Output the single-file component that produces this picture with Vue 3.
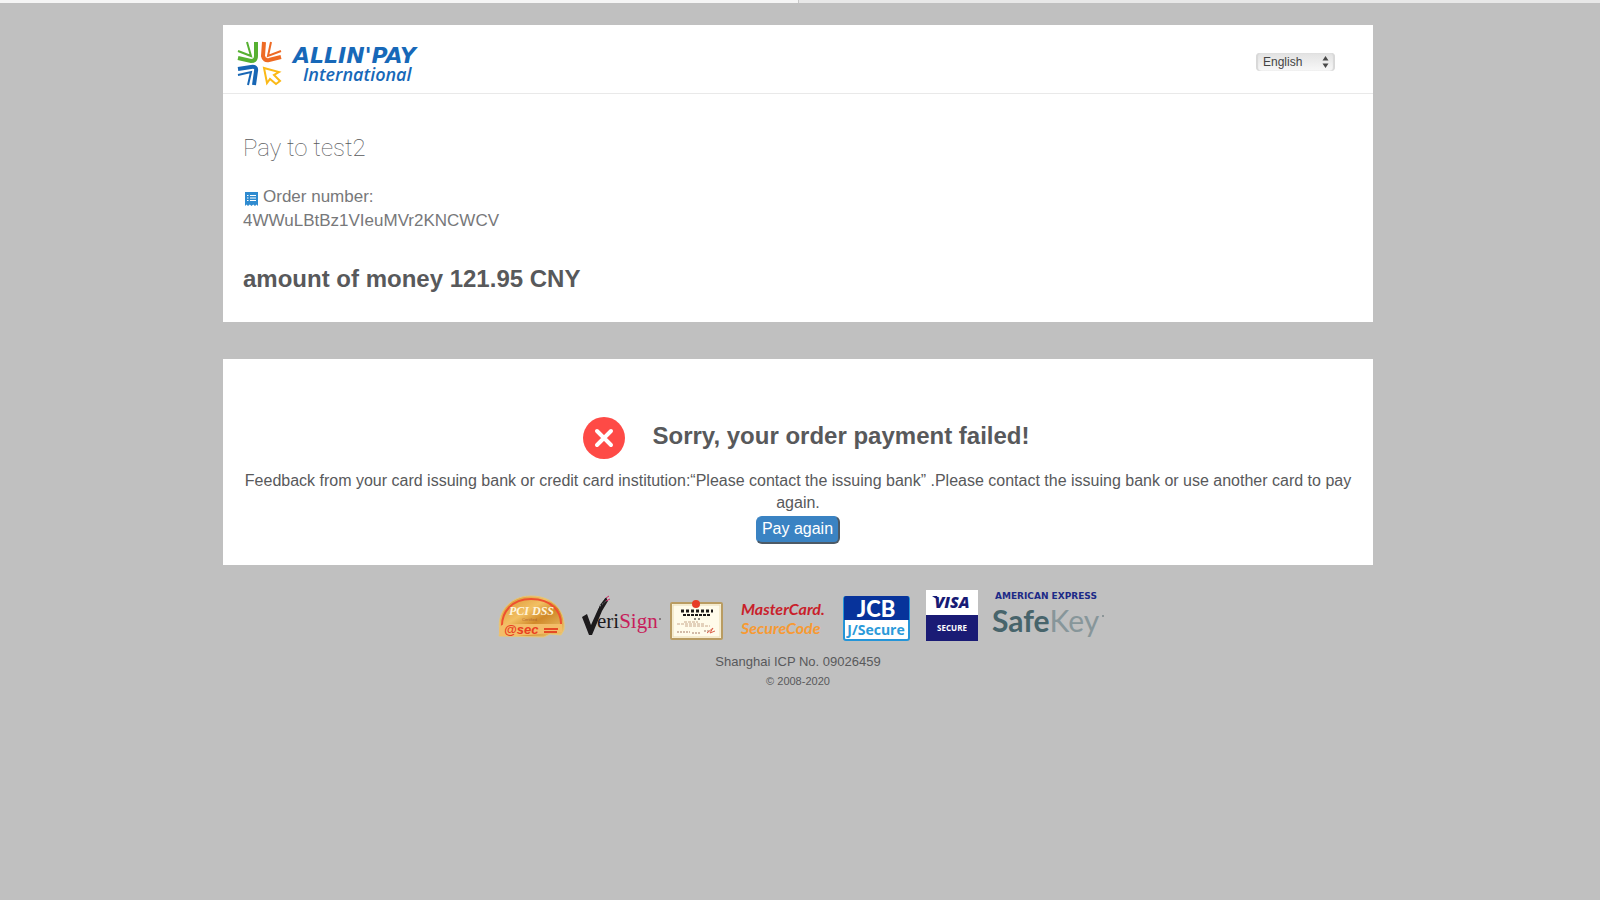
<template>
    <div class="page">
        <div class="top-strip">
            <span></span>
            <span></span>
        </div>

        <main class="container">
            <section class="card">
                <header class="card-header">
                    <svg class="logo" width="204" height="52" viewBox="0 0 204 52" role="img" aria-label="Allinpay International">
                        <g fill="none" stroke-width="3">
                            <g stroke="#56b031">
                                <path d="M1 10L14 15L10 1" stroke-width="2" />
                                <path d="M1 17L14 20Q19 20 19 15V1" stroke-width="4" />
                            </g>
                            <g stroke="#ee6a24">
                                <path d="M34 1L31 15L44 10" stroke-width="2" />
                                <path d="M27 1L26 15Q27 20 32 19L44 16" stroke-width="4" />
                            </g>
                            <g stroke="#1766b5">
                                <path d="M1 28L14 26Q20 25 19 30L17 44" stroke-width="4" />
                                <path d="M1 34L14 31L11 44" stroke-width="2" />
                            </g>
                            <path d="M27 27L42 31L37 34L43 40L39 43L33 38L30 42Z" stroke="#fbb917" stroke-width="2" />
                        </g>
                        <text class="logo-name" x="56" y="22">ALLIN'PAY</text>
                        <text class="logo-sub" x="66" y="40">International</text>
                    </svg>
                    <div class="language">
                        <select v-model="language" aria-label="Language">
                            <option v-for="item in languages" :key="item">{{ item }}</option>
                        </select>
                        <svg width="7" height="12" viewBox="0 0 7 12" aria-hidden="true">
                            <path d="M3.5 0L6.5 4.5H0.5ZM3.5 12L6.5 7.5H0.5Z" fill="#4a4a4a" />
                        </svg>
                    </div>
                </header>
                <div class="order">
                    <h1>Pay to {{ order.merchant }}</h1>
                    <p class="order-number">
                        <svg width="13" height="14" viewBox="0 0 13 14" aria-hidden="true">
                            <path d="M0 0H13V14L11.5 12.5L10 14L8.2 12.5L6.5 14L4.8 12.5L3 14L1.5 12.5L0 14Z" fill="#2f8bd0" />
                            <path d="M2 3.5H3.5M5 3.5H11M2 6H3.5M5 6H11M2 8.5H3.5M5 8.5H11" stroke="#fff" />
                        </svg>
                        <span>Order number:</span>
                    </p>
                    <p class="order-id">{{ order.id }}</p>
                    <h2>amount of money {{ order.amount }} {{ order.currency }}</h2>
                </div>
            </section>

            <section class="card result">
                <div class="result-title">
                    <svg width="42" height="42" viewBox="0 0 42 42" aria-hidden="true">
                        <circle cx="21" cy="21" r="21" fill="#fe4a46" />
                        <path d="M14 14L28 28M28 14L14 28" stroke="#fff" stroke-width="4" stroke-linecap="round" />
                    </svg>
                    <h2>Sorry, your order payment failed!</h2>
                </div>
                <p>
                    Feedback from your card issuing bank or credit card institution:“{{ order.feedback }}” .Please contact the
                    issuing bank or use another card to pay again.
                </p>
                <button type="button" class="pay-again">Pay again</button>
            </section>
        </main>

        <footer>
            <div class="badges">
                <svg width="80" height="52" viewBox="0 0 80 52" role="img" aria-label="PCI DSS atsec">
                    <defs>
                        <linearGradient id="gold" x1="0" y1="0" x2="1" y2="1">
                            <stop offset="0" stop-color="#d78b2c" />
                            <stop offset="0.4" stop-color="#f2c063" />
                            <stop offset="0.6" stop-color="#d18a2a" />
                            <stop offset="1" stop-color="#eecb76" />
                        </linearGradient>
                    </defs>
                    <path d="M10 41C6 25 18 6 41 6C64 6 76 22 74 40L71 45L60 44L54 47L9 46Z" fill="url(#gold)" stroke="#e6c77b" />
                    <path d="M12 38C11 22 22 9 41 9C62 9 72 22 71 36" fill="none" stroke="#ee5030" stroke-width="2" />
                    <path d="M9 40Q9 36 14 34H72V42Q50 44 27 46H10Z" fill="#f3bd68" />
                    <text class="pci-name" x="19" y="25">PCI DSS</text>
                    <text class="pci-note" x="32" y="31">Certified</text>
                    <text class="pci-sec" x="14" y="44">@sec</text>
                    <path d="M54 39H68M54 42H67" stroke="#e54a25" stroke-width="2" />
                </svg>
                <svg width="84" height="52" viewBox="0 0 84 52" role="img" aria-label="VeriSign">
                    <path d="M4 27L9 24L13 35L22 15L28 7L30 11L24 21L14 45H11Z" fill="#1c1a1c" />
                    <path d="M23 12L29 6M20 18L30 9" stroke="#c8c8c8" stroke-dasharray="1 2" />
                    <path d="M28 8L31 6M28 11L32 9" stroke="#d12864" />
                    <text class="verisign" x="19" y="38">eri<tspan fill="#c71e5b">Sign</tspan></text>
                    <circle cx="82" cy="29" r="1" fill="#716468" />
                </svg>
                <svg width="58" height="52" viewBox="0 0 58 52" role="img" aria-label="Business licence">
                    <rect x="1" y="13" width="51" height="36" rx="1" fill="#fffbea" stroke="#b99c62" stroke-width="2" />
                    <rect x="3" y="15" width="47" height="32" fill="none" stroke="#eadbb3" />
                    <circle cx="26" cy="14" r="4" fill="#e73b27" />
                    <path d="M11 21H43" stroke="#1b1919" stroke-width="3" stroke-dasharray="3 2" />
                    <path d="M13 25H40" stroke="#1b1919" stroke-width="2" stroke-dasharray="3 1" />
                    <path d="M24 29H31" stroke="#1b1919" stroke-dasharray="2 2" />
                    <path d="M7 34H34M14 32H28M15 36H40" stroke="#c8a88c" stroke-dasharray="3 1" />
                    <path d="M7 42H20M22 43H30M34 41H40" stroke="#a67c66" stroke-dasharray="2 1" />
                    <path d="M37 43L43 38L40 43L45 41" fill="none" stroke="#db604a" />
                </svg>
                <svg width="96" height="52" viewBox="0 0 96 52" role="img" aria-label="MasterCard SecureCode">
                    <text class="mastercard" x="5" y="25" fill="#c91f2b">MasterCard.</text>
                    <text class="mastercard" x="5" y="44" fill="#f79a33">SecureCode</text>
                </svg>
                <svg width="74" height="52" viewBox="0 0 74 52" role="img" aria-label="JCB J/Secure">
                    <rect x="4" y="7" width="65" height="43" rx="2" fill="#fff" stroke="#2495d8" stroke-width="2" />
                    <path d="M4 30V8Q4 6 6 6H67Q69 6 69 8V30Z" fill="#07339b" />
                    <text class="jcb" x="36" y="27">JCB</text>
                    <text class="jsecure" x="36" y="45">J/Secure</text>
                </svg>
                <svg width="60" height="52" viewBox="0 0 60 52" role="img" aria-label="Visa Secure">
                    <rect x="4" width="52" height="51" fill="#fff" />
                    <rect x="4" y="25" width="52" height="26" fill="#1a1b75" />
                    <path d="M10 6H15L17 10L13 8Z" fill="#171a74" />
                    <text class="visa" x="30" y="18">VISA</text>
                    <text class="visa-secure" x="30" y="41">SECURE</text>
                </svg>
                <svg width="116" height="52" viewBox="0 0 116 52" role="img" aria-label="American Express SafeKey">
                    <text class="amex" x="5" y="9">AMERICAN EXPRESS</text>
                    <text class="safekey" x="2" y="42">Safe<tspan class="safekey-end">Key</tspan></text>
                    <circle cx="113" cy="26" r="1" fill="#7c898b" />
                </svg>
            </div>
            <p>Shanghai ICP No. 09026459</p>
            <small>© 2008-2020</small>
        </footer>
    </div>
</template>

<script setup>
import { ref } from 'vue'

const languages = ['English', '简体中文', '繁體中文']
const language = ref('English')

const order = {
    merchant: 'test2',
    id: '4WWuLBtBz1VIeuMVr2KNCWCV',
    amount: '121.95',
    currency: 'CNY',
    feedback: 'Please contact the issuing bank'
}
</script>

<style>
body {
    background-color: #c0c0c0;
}
</style>

<style scoped>
.page {
    min-height: 100vh;
    background-color: #c0c0c0;
    color: #58595b;
    font-family: "Liberation Sans", "Noto Sans CJK SC", sans-serif;
}

.top-strip {
    display: flex;
    height: 3px;
    padding-right: 4px;
    background-color: #e8e8e8;
}

.top-strip span {
    flex: 1;
}

.top-strip span:first-child {
    background-color: #f5f5f5;
    border-right: 1px solid #c8c8c8;
}

.container {
    display: flex;
    flex-direction: column;
    gap: 37px;
    max-width: 1150px;
    margin: 0 auto;
    padding: 22px 4px 0 0;
}

.card {
    background-color: #fff;
}

.card-header {
    display: flex;
    justify-content: space-between;
    align-items: center;
    height: 68px;
    padding: 0 38px 0 14px;
    border-bottom: 1px solid #e9e9e9;
}

.logo {
    margin-top: 16px;
}

.logo-name {
    font: italic bold 22px "DejaVu Sans", sans-serif;
    fill: #1768b8;
}

.logo-sub {
    font: italic 600 18px "Open Sans", sans-serif;
    fill: #1768b8;
}

.language {
    display: grid;
    align-items: center;
    width: 79px;
    margin-top: 6px;
}

.language select,
.language svg {
    grid-area: 1 / 1;
}

.language svg {
    justify-self: end;
    margin-right: 6px;
    pointer-events: none;
}

.language select {
    width: 100%;
    height: 18px;
    padding: 0 16px 0 7px;
    appearance: none;
    border: 0;
    border-radius: 4px;
    background: linear-gradient(#e2e2e2, #f8f8f8);
    box-shadow: inset 2px 0 1px #d8d8d8, inset -2px 0 1px #d8d8d8;
    color: #444;
    font: 12px "Liberation Sans", "Noto Sans CJK SC", sans-serif;
}

h1,
h2,
p {
    margin: 0;
}

h1 {
    font: 100 24px/32px Roboto, sans-serif;
}

h2 {
    font-size: 24px;
    line-height: 32px;
}

.order {
    padding: 38px 20px 27px;
}

.order-number {
    display: flex;
    align-items: center;
    gap: 5px;
    margin-top: 21px;
    padding-left: 2px;
}

.order-number svg {
    margin-top: 4px;
}

.order-number,
.order-id {
    color: #77787a;
    font-size: 17px;
    line-height: 24px;
}

.order h2 {
    margin-top: 30px;
}

.result {
    padding: 58px 20px 21px;
    text-align: center;
}

.result-title {
    display: flex;
    justify-content: center;
    align-items: center;
    gap: 28px;
    padding-left: 16px;
}

.result-title h2 {
    padding-bottom: 4px;
}

.result p {
    margin-top: 11px;
    font-size: 16px;
    line-height: 22px;
}

.pay-again {
    display: block;
    margin: 2px auto 0;
    height: 28px;
    padding: 0 5px 1px;
    border: 1px solid #3a83c3;
    border-right: 2px solid #4d5a66;
    border-bottom: 2px solid #4d5a66;
    border-radius: 6px;
    background-color: #3a83c3;
    color: #fff;
    font: 16px "Liberation Sans", sans-serif;
    cursor: pointer;
}

footer {
    padding: 25px 4px 24px 0;
    text-align: center;
}

.badges {
    display: flex;
    justify-content: center;
    gap: 8px;
}

footer p {
    margin-top: 10px;
    font-size: 13px;
    line-height: 20px;
}

footer small {
    display: block;
    font-size: 11px;
    line-height: 18px;
}

.pci-name {
    font: italic bold 12px "Liberation Serif", serif;
    fill: #fff4dc;
}

.pci-note {
    font: 4px "Liberation Sans", sans-serif;
    fill: #b0632b;
}

.pci-sec {
    font: italic bold 13px "Liberation Sans", sans-serif;
    fill: #e9401f;
}

.verisign {
    font: 21px "Liberation Serif", serif;
    fill: #1c1a1c;
}

.mastercard {
    font: italic bold 16px Lato, sans-serif;
}

.jcb {
    font: 900 22px Lato, sans-serif;
    fill: #fff;
    text-anchor: middle;
}

.jsecure {
    font: bold 14px "Open Sans", sans-serif;
    fill: #2b9ad9;
    text-anchor: middle;
}

.visa {
    font: italic 800 16px "Open Sans", sans-serif;
    fill: #171a74;
    text-anchor: middle;
}

.visa-secure {
    font: bold 8px "Open Sans", sans-serif;
    fill: #fff;
    text-anchor: middle;
}

.amex {
    font: bold 9px "DejaVu Sans", sans-serif;
    fill: #1c2a87;
}

.safekey {
    font: bold 30px Lato, sans-serif;
    fill: #47646b;
}

.safekey-end {
    font-weight: normal;
    fill: #87969a;
}
</style>
